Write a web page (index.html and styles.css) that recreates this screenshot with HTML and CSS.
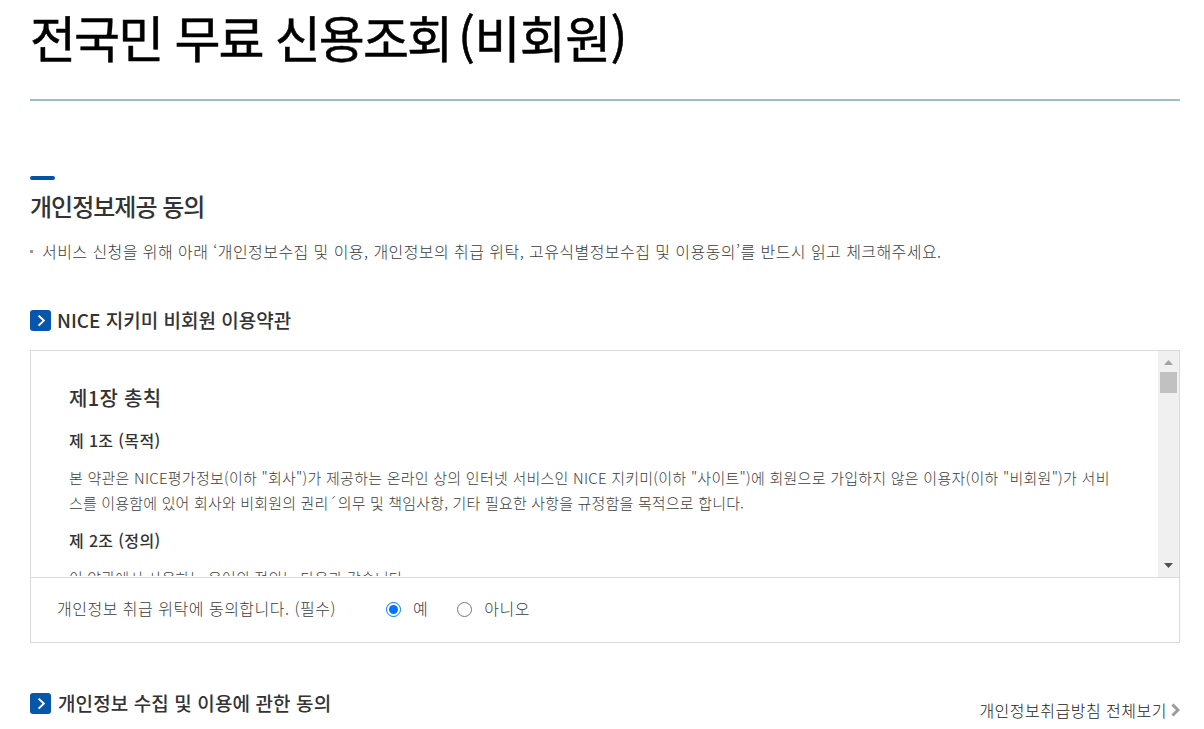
FILE: index.html
```
<!DOCTYPE html>
<html lang="ko">
<head>
  <meta charset="UTF-8" />
  <meta name="viewport" content="width=device-width, initial-scale=1.0" />
  <title>전국민 무료 신용조회(비회원)</title>
  <link rel="stylesheet" href="styles.css">
</head>
<body>
  <div class="container">
    <h1 class="page-title">전국민 무료 신용조회<span class="guest">(비회원)</span></h1>

    <div class="section-head">
      <h2>개인정보제공 동의</h2>
      <p class="desc">서비스 신청을 위해 아래 ‘개인정보수집 및 이용, 개인정보의 취급 위탁, 고유식별정보수집 및 이용동의’를 반드시 읽고 체크해주세요.</p>
    </div>

    <h3 class="sub-title">
      <svg class="ico" viewBox="0 0 21 21"><rect width="21" height="21" rx="3" /><path d="M8.6 5.6 L13.8 10.6 L8.6 15.6" /></svg>
      <span>NICE 지키미 비회원 이용약관</span>
    </h3>

    <div class="agree-box">
      <div class="terms-wrap">
        <div class="terms">
          <h4>제1장 총칙</h4>
          <h5>제 1조 (목적)</h5>
          <p><span class="line1">본 약관은 NICE평가정보(이하 "회사")가 제공하는 온라인 상의 인터넷 서비스인 NICE 지키미(이하 "사이트")에 회원으로 가입하지 않은 이용자(이하 "비회원")가 서비</span><br>스를 이용함에 있어 회사와 비회원의 권리´의무 및 책임사항, 기타 필요한 사항을 규정함을 목적으로 합니다.</p>
          <h5>제 2조 (정의)</h5>
          <p>이 약관에서 사용하는 용어의 정의는 다음과 같습니다.</p>
        </div>
        <div class="scrollbar">
          <svg class="arrow up" viewBox="0 0 9 5"><path d="M4.5 0 L9 5 H0 Z" /></svg>
          <div class="thumb"></div>
          <svg class="arrow down" viewBox="0 0 9 5"><path d="M0 0 H9 L4.5 5 Z" /></svg>
        </div>
      </div>
      <div class="agree-row">
        <span class="question">개인정보 취급 위탁에 동의합니다. (필수)</span>
        <label class="yes"><input type="radio" name="agree" checked>예</label>
        <label><input type="radio" name="agree">아니오</label>
      </div>
    </div>

    <div class="next-head">
      <h3 class="sub-title">
        <svg class="ico" viewBox="0 0 21 21"><rect width="21" height="21" rx="3" /><path d="M8.6 5.6 L13.8 10.6 L8.6 15.6" /></svg>
        <span>개인정보 수집 및 이용에 관한 동의</span>
      </h3>
      <a class="view-all" href="#"><span>개인정보취급방침 전체보기</span><svg viewBox="0 0 9 14"><path d="M1.5 1.5 L7 7 L1.5 12.5" /></svg></a>
    </div>
  </div>
</body>
</html>
```

FILE: styles.css
```
* {
  margin: 0;
  padding: 0;
  box-sizing: border-box;
}

body {
  background: #fff;
  color: #3c3c3c;
  font-family: "Noto Sans CJK KR", sans-serif;
  font-size: 16px;
  font-weight: 300;
  overflow: hidden;
}

h1, h2, h3, h4, h5 {
  color: #333;
  font-weight: 500;
  white-space: nowrap;
}

.container {
  width: 1150px;
  margin-left: 30px;
}

.page-title {
  height: 101px;
  border-bottom: 2px solid #9fbccb;
  color: #000;
  font-size: 50px;
  font-weight: 400;
  line-height: 72px;
  letter-spacing: -1.9px;
  -webkit-text-stroke: 0.5px #000;
}

.guest {
  margin-left: 7px;
  letter-spacing: -0.6px;
}

.section-head {
  padding-top: 75px;
}

.section-head::before {
  content: "";
  display: block;
  width: 25px;
  height: 4px;
  border-radius: 2px;
  background: #0353a8;
}

.section-head h2 {
  margin-top: 8px;
  font-size: 24px;
  line-height: 36px;
  letter-spacing: -1px;
}

.desc {
  display: flex;
  align-items: center;
  margin-top: 15px;
  line-height: 24px;
  letter-spacing: 0.44px;
  white-space: nowrap;
}

.desc::before {
  content: "";
  width: 3px;
  height: 3px;
  margin-right: 9px;
  background: #999;
}

.sub-title {
  display: flex;
  align-items: center;
  gap: 6px;
  height: 28px;
  font-size: 19px;
  line-height: 28px;
}

.section-head + .sub-title {
  margin-top: 43px;
}

.ico {
  width: 21px;
  height: 21px;
}

.ico rect {
  fill: #0656ab;
}

.ico path {
  fill: none;
  stroke: #fff;
  stroke-width: 2;
}

.agree-box {
  height: 293px;
  margin-top: 16px;
  border: 1px solid #dbdbdb;
}

.terms-wrap {
  display: flex;
  height: 227px;
  border-bottom: 1px solid #dbdbdb;
}

.terms {
  flex: 1;
  height: 225px;
  padding: 32px 0 0 38px;
  overflow: hidden;
}

.terms h4 {
  font-size: 20px;
  line-height: 30px;
  letter-spacing: 0.3px;
}

.terms h5 {
  margin-top: 15px;
  font-size: 16px;
  line-height: 24px;
  letter-spacing: 0.35px;
}

.terms p {
  margin-top: 13px;
  font-size: 15px;
  line-height: 25px;
  letter-spacing: 0.18px;
  white-space: nowrap;
}

.line1 {
  letter-spacing: 0.25px;
}

.terms p + h5 {
  margin-top: 13px;
}

.scrollbar {
  display: flex;
  flex-direction: column;
  align-items: center;
  width: 21px;
  background: #f0f0f0;
}

.arrow {
  width: 9px;
  height: 5px;
}

.up {
  margin-top: 9px;
  fill: #a3a3a3;
}

.thumb {
  width: 17px;
  height: 21px;
  margin-top: 7px;
  background: #c1c1c1;
}

.down {
  margin: auto 0 9px;
  fill: #505050;
}

.agree-row {
  display: flex;
  align-items: center;
  height: 60px;
  padding-left: 26px;
}

.question {
  width: 329px;
  letter-spacing: 0.5px;
}

.agree-row label {
  display: flex;
  align-items: center;
  letter-spacing: 0.5px;
}

.agree-row input {
  width: 15px;
  height: 15px;
  margin: 2px 12px 0 0;
}

.yes {
  margin-right: 29px;
}

.next-head {
  display: flex;
  justify-content: space-between;
  margin-top: 46px;
}

.next-head .sub-title {
  gap: 7px;
  letter-spacing: 0.1px;
}

.view-all {
  display: flex;
  align-items: center;
  gap: 4px;
  height: 24px;
  margin-top: 9px;
  color: #222;
  letter-spacing: 0.5px;
  text-decoration: none;
}

.view-all svg {
  width: 9px;
  height: 14px;
  fill: none;
  stroke: #9b9b9b;
  stroke-width: 3;
}
```
